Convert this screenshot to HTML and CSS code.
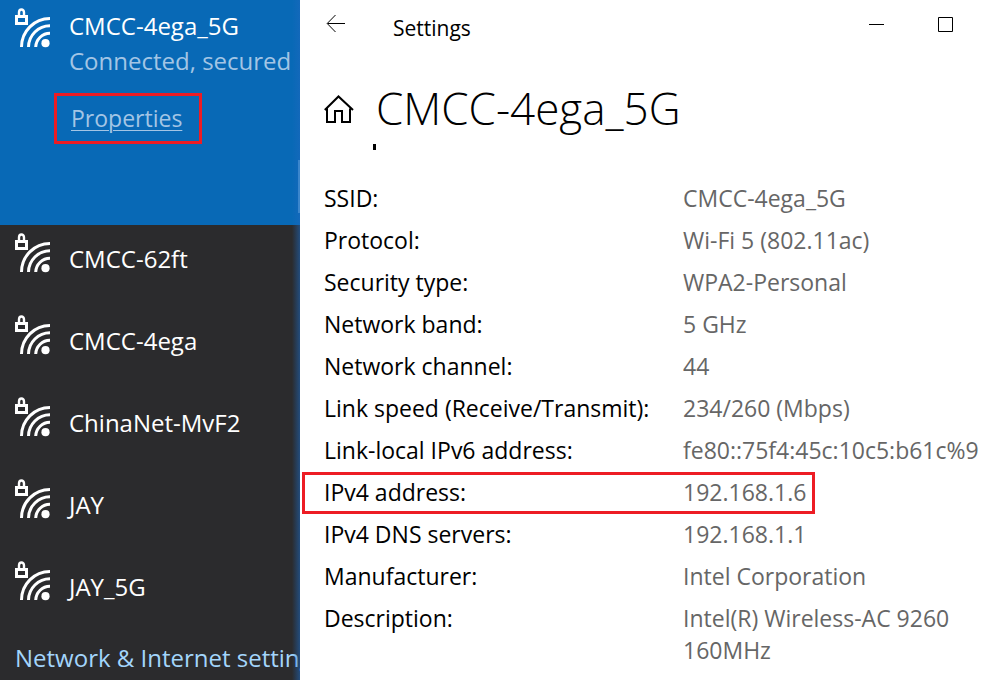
FILE: index.html
```html
<!DOCTYPE html>
<html lang="en">
<head>
<meta charset="utf-8">
<title>Settings</title>
<link rel="stylesheet" href="styles.css">
</head>
<body>
<svg class="defs" aria-hidden="true">
  <symbol id="wifi" viewBox="0 0 36 40">
    <g fill="none" stroke="currentColor" stroke-width="3">
      <path d="M1.5 8.5h10v7h-10z"/>
      <path d="M4 8V4.500a2.300 2.800 0 0 1 5 0V8" stroke-width="2.400"/>
      <path d="M6.500 39A28.500 28.500 0 0 1 35 10.500"/>
      <path d="M13.500 39A21.500 21.500 0 0 1 35 17.800"/>
      <path d="M20.700 39A14.300 14.300 0 0 1 35 25.300"/>
    </g>
    <circle cx="30.500" cy="35.200" r="4.100" fill="currentColor"/>
  </symbol>
</svg>
<div class="screen">
  <aside class="flyout">
    <ul class="networks">
      <li class="network network-active">
        <svg class="wifi"><use href="#wifi"/></svg>
        <div class="network-text">
          <span class="name">CMCC-4ega_5G</span>
          <span class="status">Connected, secured</span>
          <a class="properties" href="#details">Properties</a>
        </div>
      </li>
      <li class="network"><svg class="wifi"><use href="#wifi"/></svg><span class="name">CMCC-62ft</span></li>
      <li class="network"><svg class="wifi"><use href="#wifi"/></svg><span class="name">CMCC-4ega</span></li>
      <li class="network"><svg class="wifi"><use href="#wifi"/></svg><span class="name">ChinaNet-MvF2</span></li>
      <li class="network"><svg class="wifi"><use href="#wifi"/></svg><span class="name">JAY</span></li>
      <li class="network"><svg class="wifi"><use href="#wifi"/></svg><span class="name">JAY_5G</span></li>
    </ul>
    <a class="settings-link" href="#settings">Network &amp; Internet settings</a>
  </aside>
  <main class="window">
    <header class="titlebar">
      <button class="icon-button" type="button" aria-label="Back">
        <svg width="20" height="18" viewBox="0 0 20 18" fill="none" stroke="currentColor"><path d="M19 8.500H1.500M9.500 0L1.200 8.500L9.500 17"/></svg>
      </button>
      <span class="app-name">Settings</span>
      <button class="icon-button" type="button" aria-label="Minimize">
        <svg width="16" height="16" viewBox="0 0 16 16" fill="none" stroke="currentColor"><path d="M0 8.500h15"/></svg>
      </button>
      <button class="icon-button" type="button" aria-label="Maximize">
        <svg width="16" height="16" viewBox="0 0 16 16" fill="none" stroke="currentColor"><path d="M.5 1.500h14v14H.5z"/></svg>
      </button>
    </header>
    <div class="heading">
      <button class="icon-button" type="button" aria-label="Home">
        <svg width="30" height="30" viewBox="0 0 30 30" fill="none" stroke="currentColor" stroke-width="2"><path d="M.8 16L14.500 2.500L29 16M3 14.500V28h8V17h7v11h8V14.500"/></svg>
      </button>
      <h1>CMCC-4ega_5G</h1>
    </div>
    <div class="scroll-edge"></div>
    <table class="details" id="details">
      <tbody>
        <tr><th scope="row">SSID:</th><td>CMCC-4ega_5G</td></tr>
        <tr><th scope="row">Protocol:</th><td>Wi-Fi 5 (802.11ac)</td></tr>
        <tr><th scope="row">Security type:</th><td>WPA2-Personal</td></tr>
        <tr><th scope="row">Network band:</th><td>5 GHz</td></tr>
        <tr><th scope="row">Network channel:</th><td>44</td></tr>
        <tr><th scope="row">Link speed (Receive/Transmit):</th><td>234/260 (Mbps)</td></tr>
        <tr><th scope="row">Link-local IPv6 address:</th><td>fe80::75f4:45c:10c5:b61c%9</td></tr>
        <tr class="marked"><th scope="row">IPv4 address:</th><td>192.168.1.6</td></tr>
        <tr><th scope="row">IPv4 DNS servers:</th><td>192.168.1.1</td></tr>
        <tr><th scope="row">Manufacturer:</th><td>Intel Corporation</td></tr>
        <tr><th scope="row">Description:</th><td>Intel(R) Wireless-AC 9260<br>160MHz</td></tr>
      </tbody>
    </table>
  </main>
</div>
</body>
</html>
```
FILE: styles.css
```css
*,
*::before,
*::after { box-sizing: border-box; }

body {
  margin: 0;
  background: #fff;
  color: #000;
  font: 23px/32px "Segoe UI", "Open Sans", "Noto Sans", sans-serif;
}

.defs { display: none; }

.screen {
  display: grid;
  grid-template-columns: 300px minmax(0, 1fr);
  min-height: 100vh;
}

/* Network flyout */
.flyout {
  position: relative;
  overflow: hidden;
  background: #2b2b2d;
  color: #fff;
}

.flyout::before {
  content: "";
  position: absolute;
  inset: 0 0 0 auto;
  width: 8px;
  background: linear-gradient(to right, rgba(28, 104, 190, 0), rgba(28, 104, 190, 0.55));
}

.flyout::after {
  content: "";
  position: absolute;
  top: 160px;
  right: 0;
  width: 2px;
  height: 53px;
  background: #3b86cc;
}

.networks {
  margin: 0;
  padding: 0;
  list-style: none;
}

.network {
  display: flex;
  gap: 18px;
  height: 82px;
  padding: 8px 0 0 15px;
}

.network .name {
  padding-top: 10px;
  font-size: 24px;
}

.wifi {
  flex: none;
  width: 36px;
  height: 40px;
}

.network-active {
  height: 225px;
  background: #0869b6;
}

.network-text {
  display: flex;
  flex-direction: column;
  align-items: flex-start;
  white-space: nowrap;
}

.network-active .name { padding-top: 2px; }

.status,
.properties { color: #a3c5e5; }

.status {
  padding-top: 3px;
  font-size: 24px;
}

.properties {
  margin: 16px 0 0 -15px;
  padding: 6px 17px 7px 14px;
  border: 3px solid #ed1c24;
  text-underline-offset: 3px;
  text-decoration-thickness: 1px;
}

.settings-link {
  display: block;
  padding: 7px 0 6px 15px;
  color: #a3d5fb;
  font-size: 24px;
  text-decoration: none;
  white-space: nowrap;
}

/* Settings window */
.window { padding: 0 0 12px 24px; }

.titlebar {
  display: flex;
  align-items: center;
  height: 48px;
  padding-right: 28px;
}

.icon-button {
  display: flex;
  flex: none;
  padding: 0;
  border: 0;
  background: none;
  color: inherit;
}

.titlebar .icon-button + .icon-button { margin-left: 53px; }

.titlebar .icon-button:first-child { padding-left: 2px; }

.app-name {
  flex: 1;
  padding: 8px 0 0 47px;
  font-size: 21px;
}

.heading {
  display: flex;
  align-items: center;
  gap: 22px;
  height: 96px;
}

.heading .icon-button { padding-top: 26px; }

.heading h1 {
  margin: 0;
  padding-top: 24px;
  font-size: 44px;
  font-weight: 300;
  line-height: 60px;
}

.scroll-edge {
  width: 3px;
  height: 6px;
  margin: 0 0 28px 49px;
  background: #000;
}

.details {
  width: 100%;
  border-collapse: collapse;
}

.details tr { position: relative; }

.details th,
.details td {
  padding: 4px 0 6px;
  font-weight: 400;
  text-align: left;
  vertical-align: top;
}

.details th { width: 359px; }

.details td { color: #666; }

.details .marked::after {
  content: "";
  position: absolute;
  inset: 0 auto 0 -22px;
  width: 513px;
  border: 3px solid #ed1c24;
}
```
